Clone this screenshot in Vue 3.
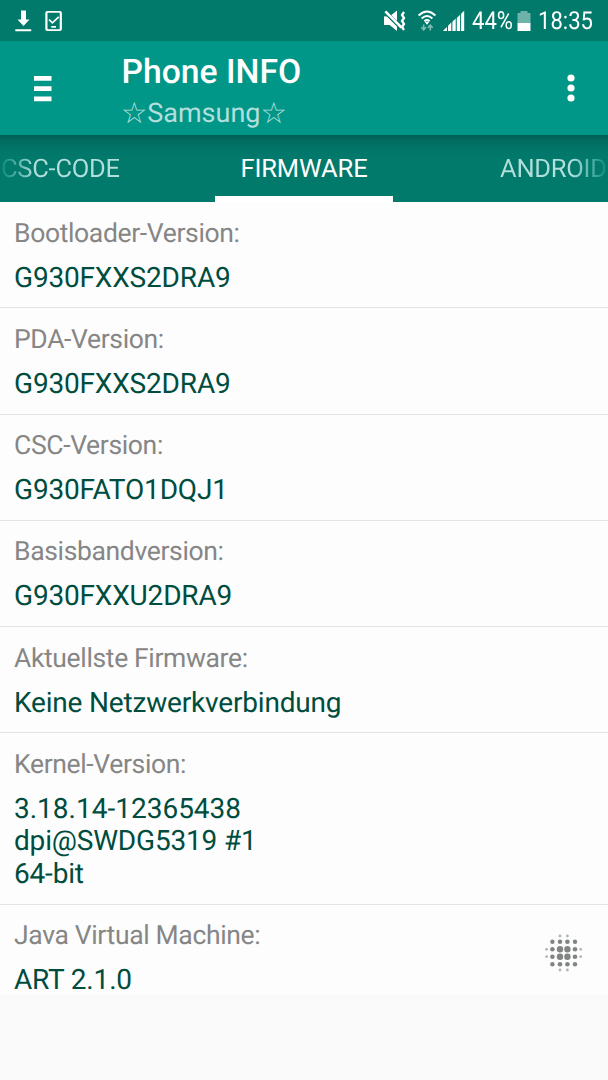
<script setup>
const rows = [
  { label: 'Bootloader-Version:', lines: ['G930FXXS2DRA9'] },
  { label: 'PDA-Version:', lines: ['G930FXXS2DRA9'] },
  { label: 'CSC-Version:', lines: ['G930FATO1DQJ1'] },
  { label: 'Basisbandversion:', lines: ['G930FXXU2DRA9'] },
  { label: 'Aktuellste Firmware:', lines: ['Keine Netzwerkverbindung'] },
  { label: 'Kernel-Version:', lines: ['3.18.14-12365438', 'dpi@SWDG5319 #1', '64-bit'] },
  { label: 'Java Virtual Machine:', lines: ['ART 2.1.0'] },
]
const isNumeric = (line) => /^[\d.-]+$/.test(line)
// Halftone dots of the floating badge: x, y, radius
const dots = [
  [17, 3, 1.4], [24.4, 3, 1.4],
  [9.4, 8.7, 2.2], [17, 8.7, 2.3], [24.4, 8.7, 2.3], [32, 8.7, 2.2],
  [3.6, 16.3, 1.4], [9.4, 16.3, 2.3], [17, 16.3, 3.2], [24.4, 16.3, 3.2], [32, 16.3, 2.3], [37.7, 16.3, 1.4],
  [3.6, 23.7, 1.4], [9.4, 23.7, 2.3], [17, 23.7, 3.2], [24.4, 23.7, 3.2], [32, 23.7, 2.3], [37.7, 23.7, 1.4],
  [9.4, 31.3, 2.2], [17, 31.3, 2.3], [24.4, 31.3, 2.3], [32, 31.3, 2.2],
  [17, 37, 1.4], [24.4, 37, 1.4],
]
</script>

<template>
  <div class="screen">
    <div class="status">
      <svg class="left-icons" width="64" height="40" viewBox="0 0 64 40" fill="#fff">
        <path d="M21 10.5h5v9h3.5L23.5 26l-6-6.500H21zM15.300 29.200h15.900v2.100H15.300z" />
        <path d="M47.300 11h12.600a2 2 0 0 1 2 2v16a2 2 0 0 1-2 2H47.300a2 2 0 0 1-2-2V13a2 2 0 0 1 2-2zM47.500 12.800v16.400h12.200V12.800z" fill-rule="evenodd" />
        <path d="M49 19.500l3.400 3.300 6.300-6" fill="none" stroke="#fff" stroke-width="1.700" />
        <path d="M51.200 26h4.800v1.700h-4.800z" />
      </svg>
      <div class="status-right">
        <svg width="88" height="40" viewBox="380 0 88 40" fill="#fff">
          <path d="M384 16.500h5.500l7.500-6v20.200l-7.500-6H384z" />
          <path d="M384.800 11.800l16.500 16.500" stroke="#01796b" stroke-width="4.400" />
          <path d="M384 16.800h3l10 10v3.900l-7.500-6H384z" />
          <path d="M385.300 11.300L401.500 27.500" stroke="#fff" stroke-width="2.600" />
          <path d="M402.800 12l-2 3 2 3-2 3 2 3-2 3 2 3" transform="translate(1.200 0)" fill="none" stroke="#fff" stroke-width="2.300" />
          <path d="M418.600 15.500Q427 7.500 435.400 15.500M421.600 18.500Q427 13.500 432.400 18.500M424.400 21.300Q427 19 429.600 21.300" fill="none" stroke="#fff" stroke-width="2" />
          <path d="M424.800 22h4.400L427 24.700z" />
          <path d="M423.700 24.500v5M421.300 27.300l2.400 2.500 2.400-2.500M430.300 30.500v-5M427.900 27.700l2.400-2.500 2.400 2.500" fill="none" stroke="#80bdb5" stroke-width="1.600" />
          <path d="M443.300 31v-.5l3.600-3.500V31zM448 25.700l3.300-3.200V31H448zM452.400 21.800l3.300-3.200V31h-3.300zM456.800 18l3.300-3.200V31h-3.300zM461.100 13.800l3.100-3V31h-3.100z" />
        </svg>
        <span class="pct">44%</span>
        <svg class="battery" width="14" height="40" viewBox="0 0 14 40">
          <path d="M3.500 11h7v2h3v10H.5V13h3z" fill="#6db3aa" />
          <path d="M.5 23h13v8H.5z" fill="#fff" />
        </svg>
        <span class="time">18:35</span>
      </div>
    </div>

    <header class="bar">
      <svg class="menu" width="18" height="26" viewBox="0 0 18 26" fill="#fff">
        <path d="M0 0h17.500v4.700H0zM0 10.300h17.500V15H0zM0 20.500h17.500v4.700H0z" />
      </svg>
      <div class="titles">
        <div class="title">Phone INFO</div>
        <div class="subtitle"><span class="star">☆</span><span class="brand">Samsung</span><span class="star">☆</span></div>
      </div>
      <svg class="more" width="8" height="28" viewBox="0 0 8 28" fill="#fff">
        <circle cx="4" cy="4" r="3.600" /><circle cx="4" cy="14" r="3.600" /><circle cx="4" cy="24" r="3.600" />
      </svg>
    </header>

    <nav class="tabs">
      <span class="tab prev">CSC-CODE</span>
      <span class="tab active">FIRMWARE</span>
      <span class="tab next">ANDROID</span>
    </nav>

    <main class="list">
      <section v-for="row in rows" :key="row.label" class="row">
        <div class="label">{{ row.label }}</div>
        <div class="value">
          <div v-for="line in row.lines" :key="line" :class="{ numeric: isNumeric(line) }">{{ line }}</div>
        </div>
      </section>
    </main>

    <svg class="badge" width="42" height="42" viewBox="0 0 42 42" fill="#808582">
      <circle v-for="(d, i) in dots" :key="i" :cx="d[0]" :cy="d[1]" :r="d[2]" :opacity="d[2] < 2 ? 0.6 : 1" />
    </svg>
  </div>
</template>

<style>
body { margin: 0; background: #fafafa; }
</style>

<style scoped>
.screen {
  position: relative;
  width: 608px;
  height: 1080px;
  overflow: hidden;
  background: #fafafa;
  font-family: Roboto, "Noto Sans", sans-serif;
  text-rendering: geometricPrecision;
}
.status {
  display: flex;
  justify-content: space-between;
  height: 40.5px;
  background: #01796b;
  color: #fff;
}
.status-right { display: flex; padding-right: 15px; }
.pct, .time {
  font-size: 24.8px;
  line-height: 44px;
  white-space: nowrap;
  transform-origin: 0 0;
  transform: scaleX(0.89);
}
.pct { width: 41px; margin-left: 4px; }
.battery { margin-left: 4px; }
.time { width: 55px; margin-left: 7px; }
.bar {
  display: flex;
  align-items: flex-start;
  height: 94.5px;
  background: #009688;
}
.menu { margin: 35.300px 0 0 33.500px; }
.titles { flex: 1; margin-left: 70px; }
.title {
  margin-top: 12px;
  font-size: 33.700px;
  line-height: 40px;
  font-weight: 500;
  color: #fff;
}
.subtitle {
  display: flex;
  height: 40px;
  line-height: 40px;
  font-size: 27px;
  color: #b2dfdb;
}
.star { width: 25.700px; margin-left: -0.500px; font: 29.500px/40px "DejaVu Sans", sans-serif; }
.brand { margin-left: 0.500px; }
.brand + .star { margin-left: 0; }
.more { margin: 33.500px 33px 0 0; }
.tabs {
  display: flex;
  height: 67.300px;
  background: linear-gradient(#015f54 0, #016d60 6px, #01776a 16px, #01796b 24px);
}
.tab {
  height: 67.300px;
  box-sizing: border-box;
  font-size: 25.500px;
  line-height: 68px;
  white-space: nowrap;
}
.prev {
  width: 215px;
  padding-left: 1px;
  letter-spacing: -0.250px;
  color: transparent;
  background: linear-gradient(90deg, #01897a 0, #b2dfdb 36px);
  background-clip: text;
}
.active {
  width: 178px;
  text-align: center;
  letter-spacing: -0.100px;
  color: #fff;
  border-bottom: 6.500px solid #fff;
}
.next {
  width: 215px;
  padding-left: 107px;
  letter-spacing: -0.250px;
  color: transparent;
  background: linear-gradient(270deg, #01897a 0, #b2dfdb 36px);
  background-clip: text;
}
.list { background: #fdfdfd; height: 793px; box-sizing: border-box; }
.row {
  box-sizing: border-box;
  padding: 15.700px 14px 13.200px;
  border-bottom: 1px solid #e4e4e4;
}
.row:first-child { padding-top: 15.400px; }
.row:last-child { border-bottom: 0; padding-bottom: 0; }
.label {
  height: 32.500px;
  line-height: 32.500px;
  font-size: 26.500px;
  letter-spacing: -0.350px;
  color: #868686;
}
.value {
  margin-top: 11.400px;
  font-size: 28px;
  line-height: 32.500px;
  letter-spacing: -0.180px;
  color: #004d40;
}
.numeric { letter-spacing: 0; }
.badge { position: absolute; left: 543px; top: 933px; }
</style>
